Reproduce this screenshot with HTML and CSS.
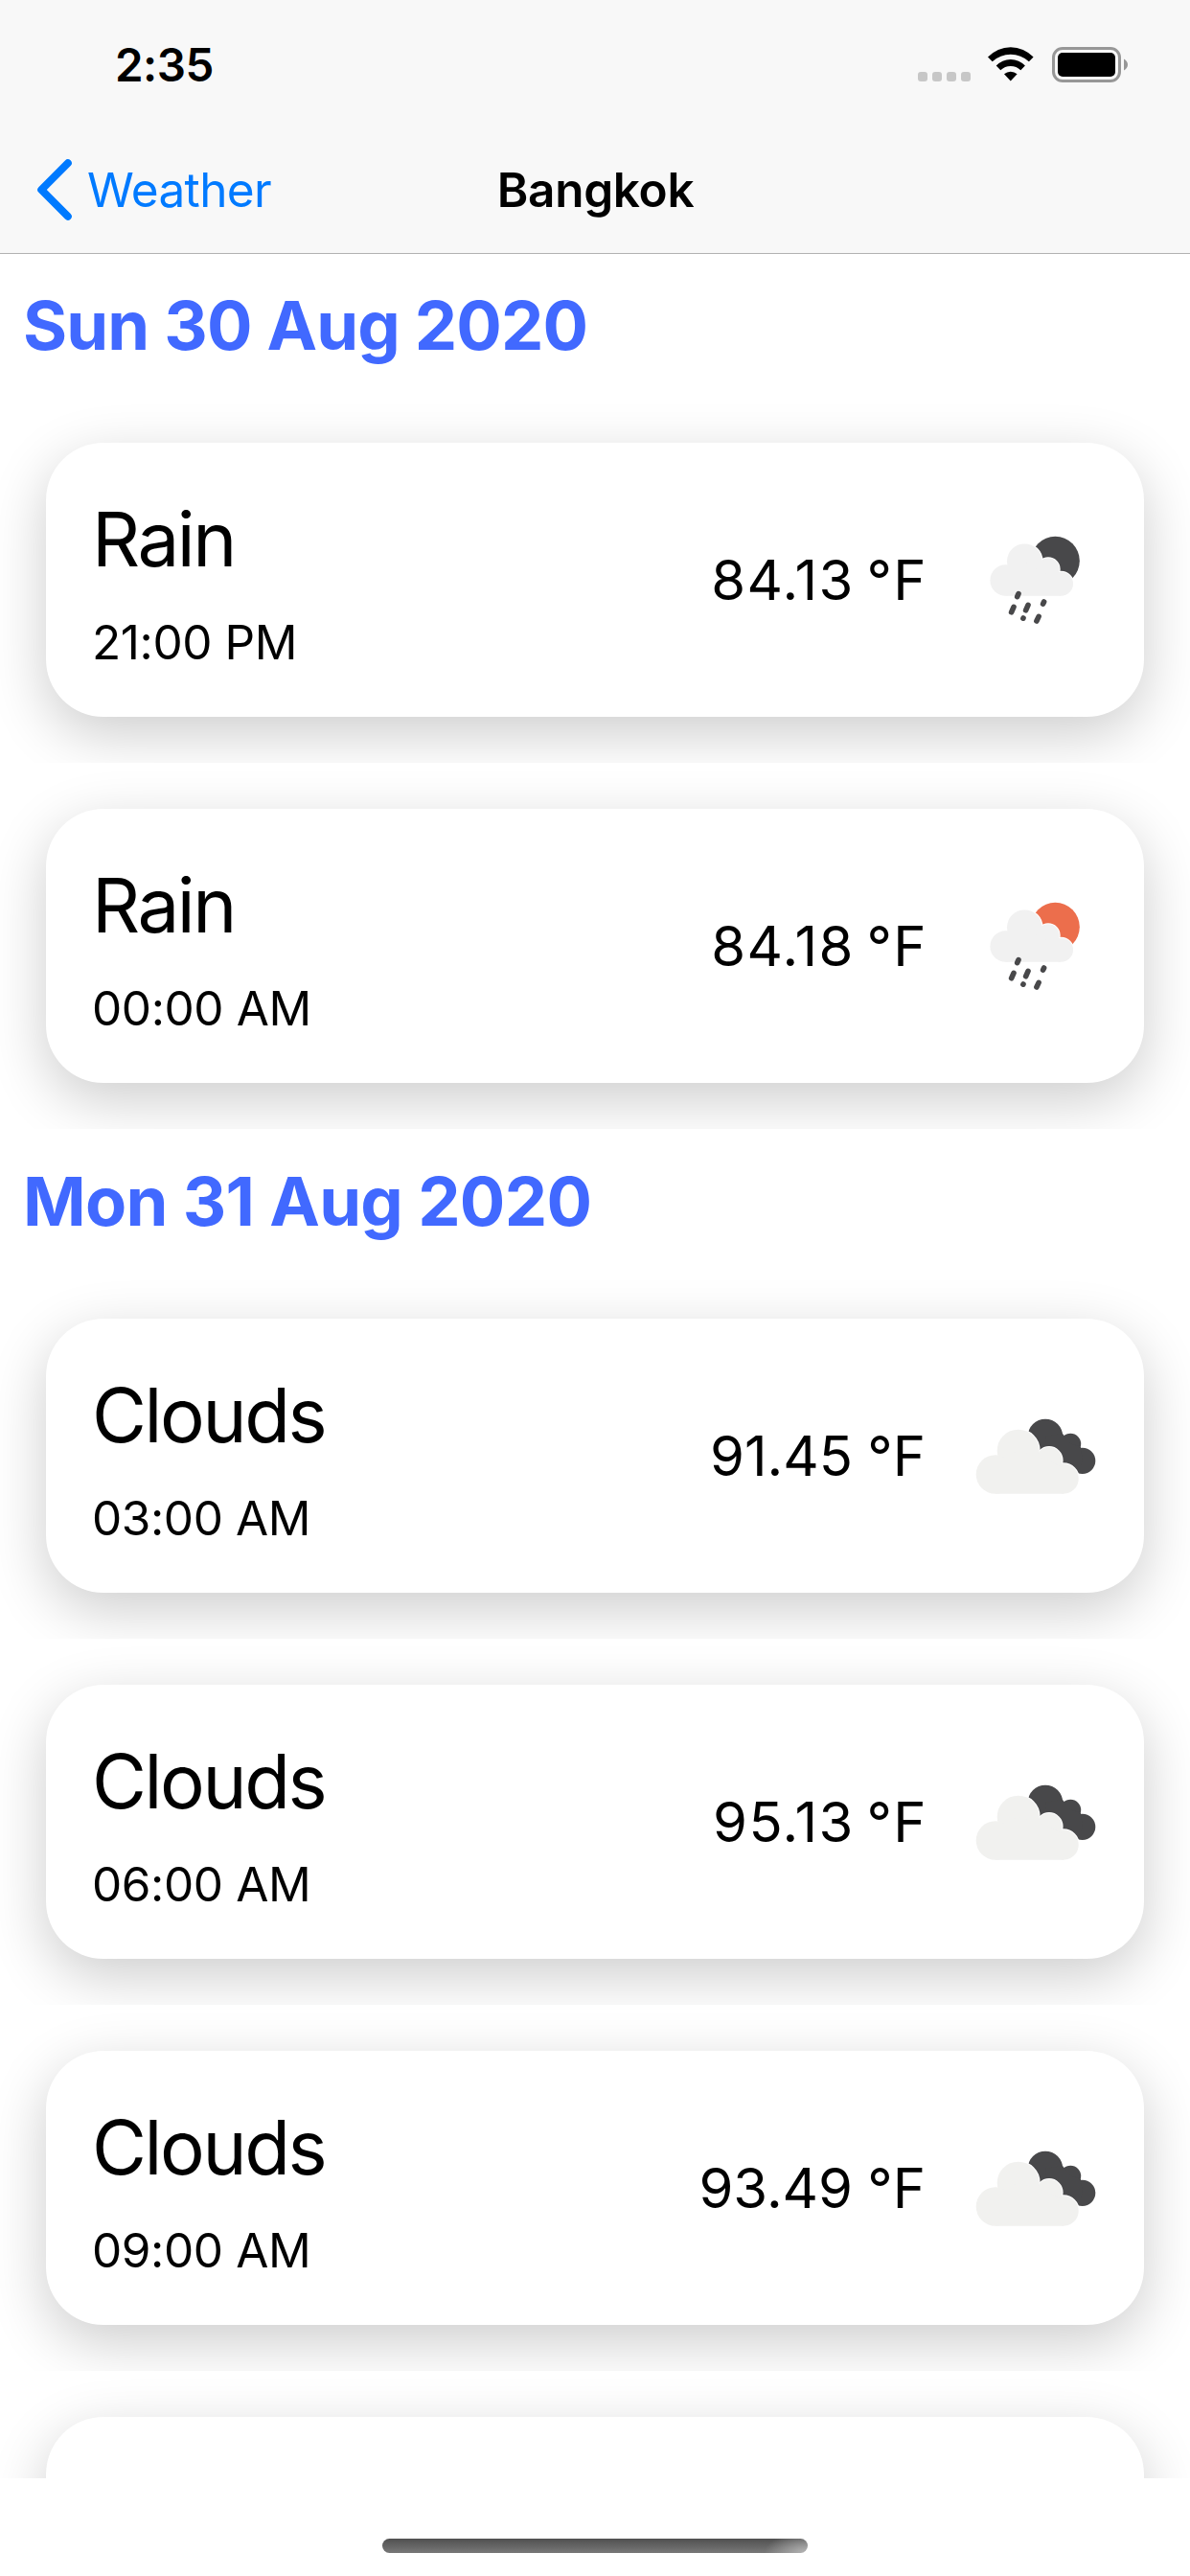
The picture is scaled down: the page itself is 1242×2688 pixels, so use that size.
FILE: index.html
```html
<!DOCTYPE html>
<html lang="en">
<head>
<meta charset="utf-8">
<title>Bangkok</title>
<link rel="stylesheet" href="styles.css">
</head>
<body>
<svg class="sprite" aria-hidden="true">
  <defs>
    <g id="rain">
      <g fill="#fff" stroke="#fff" stroke-width="2">
        <circle cx="73.3" cy="55.7" r="18.3"/><circle cx="98" cy="64" r="11.7"/><circle cx="111.5" cy="79.2" r="12.5"/>
      </g>
      <g fill="#f1f1f1">
        <circle cx="53.6" cy="75.5" r="16.2"/><circle cx="73.3" cy="55.7" r="18.3"/><circle cx="98" cy="64" r="11.7"/><circle cx="111.5" cy="79.2" r="12.5"/>
        <path d="M53.6 91.7H111.5V70H98L73 56L53.6 70Z"/>
      </g>
      <path d="M67 89.6L65.7 92.6M62 103.4L59.6 108.8M77 101.4L74.6 106.8M93.6 98L92.6 100.2M72 115L71.9 115.2M88.1 113.4L85.9 118" fill="none" stroke="#48484a" stroke-width="5.6" stroke-linecap="round"/>
    </g>
    <g id="clouds">
      <g fill="#48484a">
        <circle cx="95" cy="55" r="18.3"/><circle cx="121.3" cy="62.7" r="10.9"/><circle cx="133.7" cy="80.3" r="13.6"/>
        <path d="M95 55L113 52L121 62L132 66L134 80L129 93L100 90Z"/>
      </g>
      <g fill="#fff" stroke="#fff" stroke-width="2">
        <circle cx="66.7" cy="69.7" r="22"/><circle cx="99" cy="79.7" r="13.6"/><circle cx="114" cy="99" r="15.7"/>
      </g>
      <g fill="#f1f1ef">
        <circle cx="42.9" cy="94.5" r="20.2"/><circle cx="66.7" cy="69.7" r="22"/><circle cx="99" cy="79.7" r="13.6"/><circle cx="114" cy="99" r="15.7"/>
        <path d="M42.9 114.7H114V88L99 80L67 70L43 80Z"/>
      </g>
    </g>
  </defs>
</svg>
<div class="screen">
  <header class="header">
    <div class="status">
      <span class="clock">2:35</span>
      <div class="indicators">
        <div class="signal"><i></i><i></i><i></i><i></i></div>
        <svg class="wifi" width="48" height="36" viewBox="0 0 48 36">
          <path d="M0 10.6A32.5 32.5 0 0 1 47.6 10.6L42.9 15.2A28.4 28.4 0 0 0 4.7 15.2Z"/>
          <path d="M8.7 19.6A20.5 20.5 0 0 1 38.9 19.6L34.3 24.2A15 15 0 0 0 13.3 24.2Z"/>
          <path d="M17 28.2A10.5 10.5 0 0 1 30.6 28.2L23.8 35.5Z"/>
        </svg>
        <svg class="battery" width="80" height="38" viewBox="0 0 80 38">
          <rect x="1.5" y="1.5" width="69" height="34" rx="9.5" fill="none" stroke="#979797" stroke-width="3"/>
          <rect x="6" y="6" width="60" height="25" rx="5"/>
          <path d="M75 12.5Q79 15 79 18.5Q79 22 75 24.5Z" fill="#979797"/>
        </svg>
      </div>
    </div>
    <nav class="nav">
      <a class="back">
        <svg width="40" height="66" viewBox="0 0 40 66"><path d="M33.8 5.2L6.2 33L33.8 60.8" fill="none" stroke="#007aff" stroke-width="8" stroke-linecap="round" stroke-linejoin="round"/></svg>
        <span class="back-label">Weather</span>
      </a>
      <h1 class="title">Bangkok</h1>
    </nav>
  </header>
  <main class="list">
    <h2 class="day">Sun 30 Aug 2020</h2>
    <div class="row"><article class="card">
      <div class="info"><div class="condition">Rain</div><div class="hour">21:00 PM</div></div>
      <div class="temp wide">84.13 °F</div>
      <svg class="icon" viewBox="0 0 150 150"><circle cx="105.4" cy="55.2" r="25.4" fill="#48484a"/><use href="#rain"/></svg>
    </article></div>
    <div class="row"><article class="card">
      <div class="info"><div class="condition">Rain</div><div class="hour">00:00 AM</div></div>
      <div class="temp wide">84.18 °F</div>
      <svg class="icon" viewBox="0 0 150 150"><circle cx="105.4" cy="55.2" r="25.4" fill="#ec6e4c"/><use href="#rain"/></svg>
    </article></div>
    <h2 class="day">Mon 31 Aug 2020</h2>
    <div class="row"><article class="card">
      <div class="info"><div class="condition">Clouds</div><div class="hour">03:00 AM</div></div>
      <div class="temp">91.45 °F</div>
      <svg class="icon" viewBox="0 0 150 150"><use href="#clouds"/></svg>
    </article></div>
    <div class="row"><article class="card">
      <div class="info"><div class="condition">Clouds</div><div class="hour">06:00 AM</div></div>
      <div class="temp wide">95.13 °F</div>
      <svg class="icon" viewBox="0 0 150 150"><use href="#clouds"/></svg>
    </article></div>
    <div class="row"><article class="card">
      <div class="info"><div class="condition">Clouds</div><div class="hour">09:00 AM</div></div>
      <div class="temp">93.49 °F</div>
      <svg class="icon" viewBox="0 0 150 150"><use href="#clouds"/></svg>
    </article></div>
    <div class="row"><article class="card"></article></div>
  </main>
  <footer class="footer"><div class="home"></div></footer>
</div>
</body>
</html>
```
FILE: styles.css
```css
* { box-sizing: border-box; }
body {
  margin: 0;
  background: #fff;
  color: #000;
  font-family: Inter, "Liberation Sans", sans-serif;
}
.sprite { display: none; }
.screen {
  width: 1242px;
  height: 2688px;
  display: flex;
  flex-direction: column;
  overflow: hidden;
}
.header {
  flex: none;
  height: 265px;
  background: #f8f8f8;
  border-bottom: 1px solid #b2b2b2;
}
.status {
  height: 132px;
  padding: 3px 64px 0 120px;
  display: flex;
  align-items: center;
  justify-content: space-between;
}
.clock { font-size: 47.5px; font-weight: 600; letter-spacing: -.5px; }
.indicators { display: flex; align-items: flex-start; }
.signal { display: flex; gap: 5px; margin: 26px 18px 0 0; }
.signal i { width: 10px; height: 10px; border-radius: 3px; background: #c7c7c7; }
.wifi { margin-right: 19px; }
.nav {
  height: 132px;
  padding: 0 36px 0 37px;
  display: grid;
  grid-template-columns: 1fr auto 1fr;
  align-items: center;
}
.back { display: flex; align-items: center; gap: 14px; color: #007aff; }
.back-label { font-size: 49.5px; letter-spacing: -.6px; }
.title { margin: 0; font-size: 49.5px; font-weight: 600; letter-spacing: -.3px; }
.list { flex: none; height: 2321px; overflow: hidden; }
.day {
  margin: 0;
  height: 150px;
  padding-left: 24px;
  line-height: 151px;
  font-size: 70.5px;
  font-weight: 700;
  letter-spacing: -.7px;
  color: #4169ff;
}
.day:first-child { height: 149px; line-height: 149px; letter-spacing: -.85px; }
.row { height: 382px; padding: 48px; overflow: hidden; background: #fff; }
.card {
  height: 286px;
  padding: 0 48px;
  border-radius: 60px;
  background: #fff;
  box-shadow: 0 18px 60px rgba(0, 0, 0, .2);
  display: flex;
  align-items: center;
}
.info { flex: 1; padding-top: 5px; display: flex; flex-direction: column; gap: 30px; }
.condition { font-size: 78px; line-height: 94px; letter-spacing: -2.4px; }
.hour { font-size: 49.5px; line-height: 60px; letter-spacing: -.4px; }
.temp { font-size: 58px; margin-right: 30px; letter-spacing: 0; word-spacing: -1px; }
.temp.wide { margin-right: 28px; letter-spacing: 1.4px; word-spacing: -5px; }
.icon { width: 150px; height: 150px; }
.footer { flex: 1; display: flex; justify-content: center; align-items: flex-end; padding-bottom: 24px; }
.home {
  width: 444px;
  height: 15px;
  border-radius: 8px;
  background:
    radial-gradient(ellipse 45px 22px at 100% 100%, rgba(190, 190, 190, .9), rgba(190, 190, 190, 0)),
    linear-gradient(#505050, #787878);
}
```
